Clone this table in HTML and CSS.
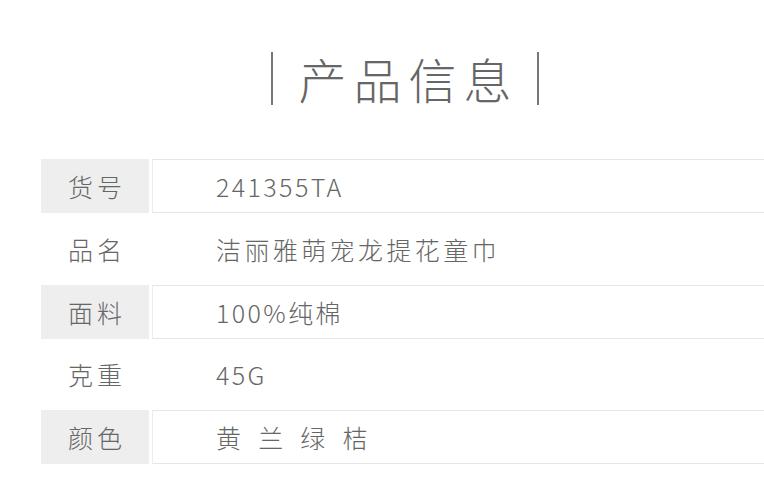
FILE: index.html
```html
<!DOCTYPE html>
<html lang="zh">
<head>
<meta charset="utf-8">
<link rel="stylesheet" href="styles.css">
</head>
<body>
<div class="page">
  <div class="title">
    <span class="bar"></span>
    <h1 class="title-text">产品信息</h1>
    <span class="bar"></span>
  </div>
  <div class="table">
    <div class="row shaded">
      <div class="label">货号</div>
      <div class="value latin">241355TA</div>
    </div>
    <div class="row">
      <div class="label">品名</div>
      <div class="value">洁丽雅萌宠龙提花童巾</div>
    </div>
    <div class="row shaded">
      <div class="label">面料</div>
      <div class="value latin">100%纯棉</div>
    </div>
    <div class="row">
      <div class="label">克重</div>
      <div class="value latin">45G</div>
    </div>
    <div class="row shaded">
      <div class="label">颜色</div>
      <div class="value spaced">黄 兰 绿 桔</div>
    </div>
  </div>
</div>
</body>
</html>
```

FILE: styles.css
```css
html, body {
  margin: 0;
  padding: 0;
  background: #ffffff;
}
body {
  width: 764px;
  height: 501px;
  overflow: hidden;
  font-family: "Noto Sans CJK SC", "Noto Sans", sans-serif;
  font-weight: 300;
  color: #666666;
}
.page {
  padding-top: 52px;
}
.title {
  display: flex;
  align-items: center;
  justify-content: center;
  padding-left: 46px;
  height: 53px;
}
.bar {
  width: 2px;
  height: 53px;
  background: #777777;
}
.title-text {
  margin: 0 18px 0 25px;
  font-size: 48px;
  font-weight: 300;
  letter-spacing: 7px;
  line-height: 53px;
  color: #666666;
}
.table {
  margin-top: 54px;
  margin-left: 41px;
  display: flex;
  flex-direction: column;
  gap: 8.75px;
}
.row {
  display: flex;
  height: 54px;
  gap: 3px;
}
.label {
  width: 108px;
  display: flex;
  align-items: center;
  justify-content: center;
  font-size: 25px;
  letter-spacing: 4px;
  text-indent: 4px;
}
.value {
  flex: 1;
  display: flex;
  align-items: center;
  padding-left: 63px;
  font-size: 25px;
  letter-spacing: 3.4px;
  white-space: pre;
}
.value.latin {
  letter-spacing: 2.4px;
}
.value.spaced {
  letter-spacing: 5.8px;
}
.shaded .label {
  background: #eeeeee;
}
.shaded .value {
  border-top: 1px solid #e6e6e6;
  border-bottom: 1px solid #e6e6e6;
  border-left: 1px solid #ececec;
}
.row:not(.shaded) .value {
  padding-left: 64px;
}
```
